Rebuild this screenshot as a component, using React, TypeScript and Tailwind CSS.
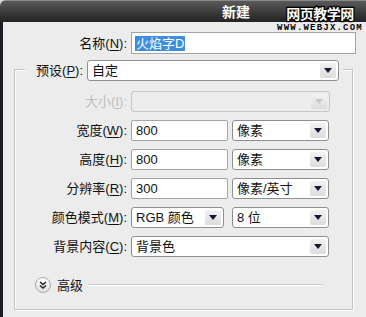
const font = { fontFamily: '"Liberation Sans", "Noto Sans CJK SC", sans-serif' };

function Arrow({ disabled }: { disabled?: boolean }) {
  return (
    <span className="flex h-[15px] w-[16px] items-center justify-center rounded-[2px] bg-gradient-to-b from-[#f2f2f2] to-[#dcdcdc]">
      <svg width="8" height="5" viewBox="0 0 8 5">
        <path d="M0 0h8L4 5z" fill={disabled ? "#c8c8cc" : "#15163a"} />
      </svg>
    </span>
  );
}

function Select({ value, w, disabled }: { value?: string; w: string; disabled?: boolean }) {
  return (
    <div
      className={`flex h-[21px] ${w} items-center justify-between rounded-[3px] border pl-[4px] pr-[2px] ${
        disabled ? "border-[#c6c6c6] bg-[#ececec]" : "border-[#8e8e8e] bg-white"
      }`}
    >
      <span className="text-[13px] leading-none text-[#111]">{value}</span>
      <Arrow disabled={disabled} />
    </div>
  );
}

function Input({ value, w }: { value: string; w: string }) {
  return (
    <div className={`flex h-[21px] ${w} items-center rounded-[2px] border border-[#a3a3a3] bg-white pl-[4px]`}>
      <span className="text-[13px] leading-none text-[#111]">{value}</span>
    </div>
  );
}

function Label({ text, k, disabled }: { text: string; k: string; disabled?: boolean }) {
  return (
    <span className={`text-[13px] leading-none ${disabled ? "text-[#bcbcbc]" : "text-[#111]"}`}>
      {text}(<span className="underline underline-offset-2">{k}</span>):
    </span>
  );
}

function Row({ children, label }: { children: React.ReactNode; label: React.ReactNode }) {
  return (
    <div className="flex items-center gap-[4px]">
      <div className="flex w-[112px] justify-end">{label}</div>
      {children}
    </div>
  );
}

export default function App() {
  return (
    <div className="relative h-[317px] w-[366px] overflow-hidden bg-[#dcdcdc]" style={font}>
      <div className="flex h-full flex-col overflow-hidden rounded-tl-[6px] bg-[#ececec]">
        <div className="flex h-[22px] shrink-0 items-center border-t border-[#8a8a8a] bg-gradient-to-b from-[#5a5a5a] to-[#232323] pl-[222px]">
          <span className="text-[14px] font-bold leading-none text-white">新建</span>
        </div>

        <div className="flex flex-1 flex-col border-l-[3px] border-[#1b1b26]">
          <div className="mt-[10px] flex items-center gap-[4px]">
            <div className="flex w-[124px] justify-end">
              <Label text="名称" k="N" />
            </div>
            <div className="flex h-[22px] w-[225px] items-center border border-[#a3a3a3] bg-white pl-[3px]">
              <span className="bg-[#3d8ee0] px-[1px] py-[1px] text-[13px] leading-none text-white">火焰字D</span>
            </div>
          </div>

          <div className="ml-[11px] mt-[15px] flex w-[339px] flex-col border border-[#c2c2c2] shadow-[inset_1px_1px_0_#ffffff,1px_1px_0_#ffffff] pb-[16px]">
            <div className="-mt-[10px] ml-[10px] flex w-[318px] items-center gap-[4px] bg-[#ececec] pr-[4px]">
              <div className="flex w-[58px] justify-end">
                <Label text="预设" k="P" />
              </div>
              <Select value="自定" w="w-[252px]" />
            </div>

            <div className="mt-[10px] flex flex-col gap-[8px]">
              <Row label={<Label text="大小" k="I" disabled />}>
                <Select w="w-[199px]" disabled />
              </Row>
              <Row label={<Label text="宽度" k="W" />}>
                <Input value="800" w="w-[97px]" />
                <Select value="像素" w="w-[97px]" />
              </Row>
              <Row label={<Label text="高度" k="H" />}>
                <Input value="800" w="w-[97px]" />
                <Select value="像素" w="w-[97px]" />
              </Row>
              <Row label={<Label text="分辨率" k="R" />}>
                <Input value="300" w="w-[97px]" />
                <Select value="像素/英寸" w="w-[97px]" />
              </Row>
              <Row label={<Label text="颜色模式" k="M" />}>
                <Select value="RGB 颜色" w="w-[93px]" />
                <div className="ml-[4px]">
                  <Select value="8 位" w="w-[97px]" />
                </div>
              </Row>
              <Row label={<Label text="背景内容" k="C" />}>
                <Select value="背景色" w="w-[198px]" />
              </Row>
            </div>

            <div className="ml-[20px] mt-[20px] flex items-center">
              <span className="flex h-[16px] w-[16px] items-center justify-center rounded-full border border-[#a8a8a8] bg-gradient-to-b from-white to-[#dedede]">
                <svg width="8" height="8" viewBox="0 0 8 8" fill="none" stroke="#222" strokeWidth="1.4">
                  <path d="M1 1l3 2.5L7 1M1 4.5L4 7l3-2.5" />
                </svg>
              </span>
              <span className="ml-[6px] text-[13px] leading-none text-[#111]">高级</span>
              <span className="ml-[5px] h-[2px] w-[235px] border-t border-b border-t-[#c8c8c8] border-b-white" />
            </div>
          </div>
        </div>
      </div>

      <div className="absolute left-[284px] top-[7px] flex w-[72px] flex-col items-center">
        <span
          className="text-[14px] font-bold leading-none tracking-[-0.5px] text-white"
          style={{ WebkitTextStroke: "2.5px #000", paintOrder: "stroke fill" }}
        >
          网页教学网
        </span>
        <span className="mt-[3px] font-mono text-[9px] font-bold leading-none tracking-[1.2px] text-black">
          WWW.WEBJX.COM
        </span>
      </div>
    </div>
  );
}
